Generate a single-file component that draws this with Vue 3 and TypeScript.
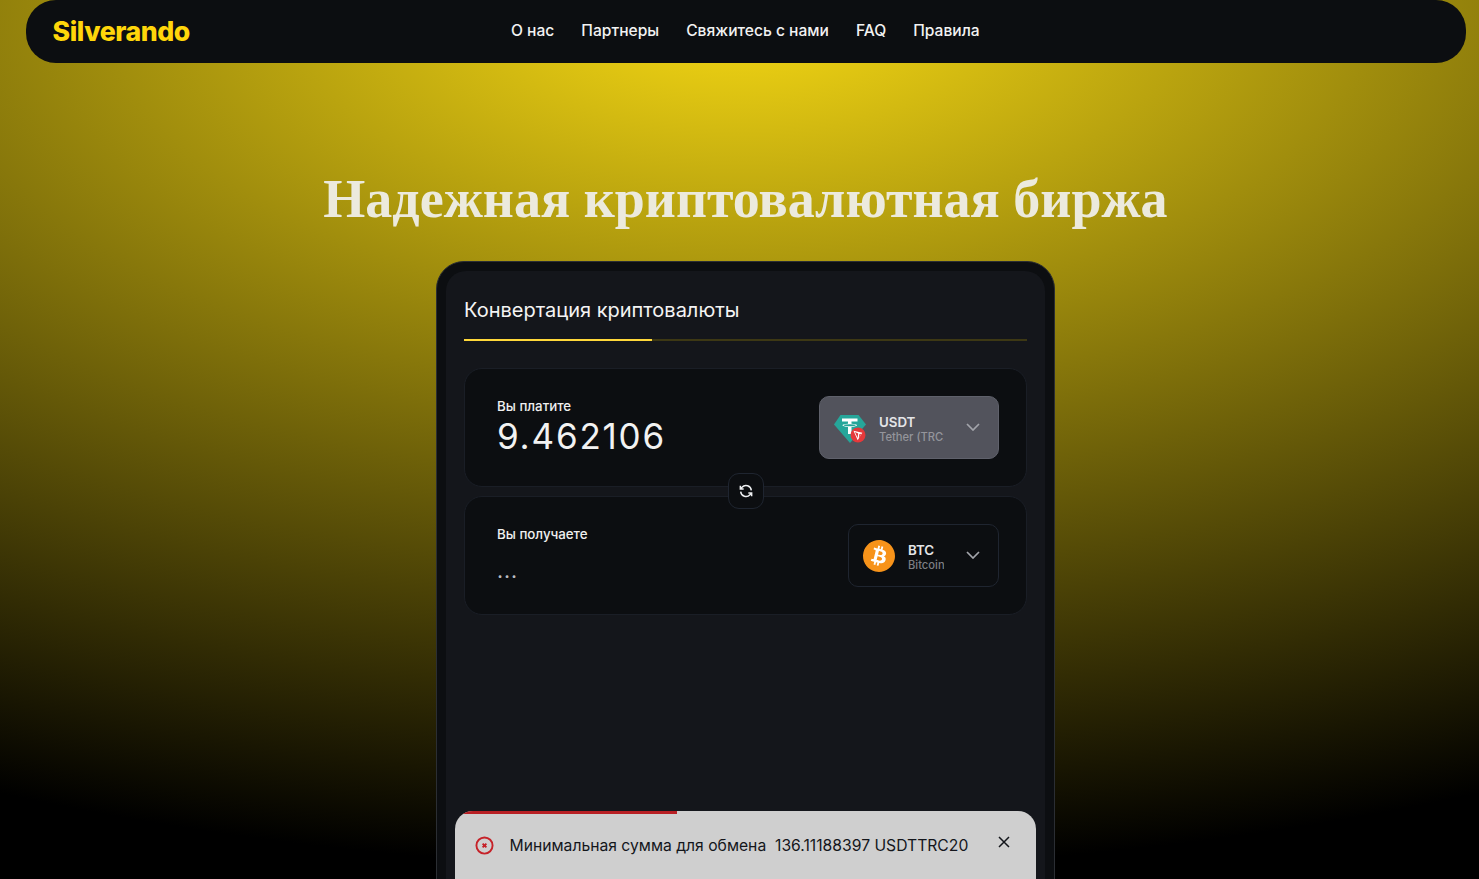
<template>
  <div class="page">
    <header class="topbar">
      <div class="logo">Silverando</div>
      <nav class="menu">
        <a v-for="item in menu" :key="item">{{ item }}</a>
      </nav>
    </header>

    <h1 class="title">Надежная криптовалютная биржа</h1>

    <section class="frame">
      <div class="panel">
        <div class="tabs"><span class="tab">Конвертация криптовалюты</span></div>

        <div class="box">
          <div class="field">
            <label>Вы платите</label>
            <div class="amount">9.462106</div>
          </div>
          <button class="coin coin-active">
            <svg class="coin-icon" viewBox="0 0 32 32">
              <path d="M6.500 3h18l7.500 9.500L16 31 0 12.500z" fill="#26a69a" />
              <path d="M8 6.500h15.500v3h-6v2.200c3 .2 5.600.8 5.600 1.600s-2.600 1.400-5.600 1.600V22H14v-7.100c-3-.2-5.600-.8-5.600-1.600s2.600-1.400 5.600-1.600V9.500H8z" fill="#fff" />
              <ellipse cx="15.700" cy="13.200" rx="6" ry="1" fill="#26a69a" />
              <circle cx="24" cy="23" r="7.500" fill="#e5393b" />
              <path d="M19.500 18.800l8.800 1.900-4.600 7.500zM20.900 20l2.700 6.100.6-4.500zM25.400 22l-.6 4.300 2.500-4.500z" fill="#fff" fill-rule="evenodd" />
            </svg>
            <span class="coin-text">
              <b>USDT</b>
              <small>Tether (TRC20)</small>
            </span>
            <svg class="chev" viewBox="0 0 14 8"><path d="M1 1l6 6 6-6" /></svg>
          </button>
        </div>

        <button class="swap">
          <svg viewBox="0 0 24 24">
            <path d="M20 11a8 8 0 0 0-14-4.500L3.500 9M3.500 4v5h5M4 13a8 8 0 0 0 14 4.500l2.500-2.500M20.500 20v-5h-5" />
          </svg>
        </button>

        <div class="box">
          <div class="field">
            <label>Вы получаете</label>
            <div class="dots">...</div>
          </div>
          <button class="coin">
            <svg class="coin-icon btc" viewBox="0 0 24 24">
              <circle cx="12" cy="12" r="10" fill="#fff" />
              <path fill="#f7931a" d="M23.638 14.904c-1.602 6.43-8.113 10.34-14.542 8.736C2.67 22.05-1.244 15.525.362 9.105 1.962 2.67 8.475-1.243 14.9.358c6.43 1.605 10.342 8.115 8.738 14.548v-.002zm-6.35-4.613c.24-1.59-.974-2.45-2.64-3.03l.54-2.153-1.315-.33-.525 2.107c-.345-.087-.705-.167-1.064-.25l.526-2.127-1.32-.33-.54 2.165c-.285-.067-.565-.132-.84-.2l-1.815-.45-.35 1.407s.975.225.955.236c.535.136.63.486.615.766l-1.477 5.92c-.075.166-.24.406-.614.314.015.02-.96-.24-.96-.24l-.66 1.51 1.71.426.93.242-.54 2.19 1.32.327.54-2.17c.36.1.705.19 1.05.273l-.51 2.154 1.32.33.545-2.19c2.24.427 3.93.257 4.64-1.774.57-1.637-.03-2.58-1.217-3.196.854-.193 1.5-.76 1.68-1.93h.01zm-3.01 4.22c-.404 1.64-3.157.75-4.05.53l.72-2.9c.896.23 3.757.67 3.33 2.37zm.41-4.24c-.37 1.49-2.662.735-3.405.55l.654-2.64c.744.18 3.137.524 2.75 2.084v.006z" />
            </svg>
            <span class="coin-text">
              <b>BTC</b>
              <small>Bitcoin</small>
            </span>
            <svg class="chev" viewBox="0 0 14 8"><path d="M1 1l6 6 6-6" /></svg>
          </button>
        </div>
      </div>
    </section>

    <div class="toast">
      <div class="progress"></div>
      <svg class="toast-icon" viewBox="0 0 20 20">
        <circle cx="10" cy="10" r="8.500" />
        <path d="M8 8l4 4M12 8l-4 4" />
      </svg>
      <span class="toast-text">Минимальная сумма для обмена&nbsp; 136.11188397 USDTTRC20</span>
      <svg class="toast-close" viewBox="0 0 12 12"><path d="M1 1l10 10M11 1L1 11" /></svg>
    </div>
  </div>
</template>

<script setup lang="ts">
const menu: string[] = ['О нас', 'Партнеры', 'Свяжитесь с нами', 'FAQ', 'Правила']
</script>

<style>
html, body {
  margin: 0;
  height: 100%;
  overflow: hidden;
  background: #000;
}
</style>

<style scoped>
.page {
  position: relative;
  box-sizing: border-box;
  height: 879px;
  overflow: hidden;
  padding-left: 12px;
  display: flex;
  flex-direction: column;
  align-items: center;
  font-family: Inter, "Noto Sans", sans-serif;
  background: radial-gradient(1800px 870px at 50% 0, #ecd013 0%, #ecd013 5%, #000 100%);
}
.topbar {
  box-sizing: border-box;
  flex: none;
  width: 1440px;
  height: 63px;
  border-radius: 30px;
  background: #0c0e11;
  display: flex;
  align-items: center;
  padding: 0 27px 1px;
  position: relative;
}
.logo {
  font-size: 26.700px;
  font-weight: 800;
  letter-spacing: -0.45px;
  color: #ffd60a;
}
.menu {
  position: absolute;
  left: 485.500px;
  top: 0;
  height: 60px;
  display: flex;
  align-items: center;
  gap: 27px;
}
.menu a {
  color: #f2f2f2;
  font-size: 15.600px;
  font-weight: 500;
}
.title {
  flex: none;
  margin: 105px 0 31px;
  font-family: "Liberation Serif", serif;
  font-size: 54px;
  line-height: 62px;
  font-weight: 700;
  color: #eceadd;
}
.frame {
  flex: none;
  box-sizing: border-box;
  width: 619px;
  height: 700px;
  padding: 9px;
  border: 1px solid #2b2e33;
  border-radius: 28px;
  background: #0c0e11;
}
.panel {
  position: relative;
  box-sizing: border-box;
  height: 100%;
  padding: 0 18px;
  border-radius: 20px;
  background: #14161b;
}
.tabs {
  box-sizing: border-box;
  height: 70px;
  border-bottom: 2px solid #3d3814;
  display: flex;
  margin-bottom: 27px;
}
.tab {
  box-sizing: border-box;
  width: 188px;
  height: 70px;
  padding-top: 27px;
  border-bottom: 2px solid #ffd83a;
  color: #f4f4f4;
  font-size: 20px;
  line-height: 25px;
  white-space: nowrap;
}
.box {
  box-sizing: border-box;
  height: 119px;
  margin-bottom: 9px;
  padding: 27px 27px 0 32px;
  display: flex;
  justify-content: space-between;
  align-items: flex-start;
  border: 1px solid #1a1e26;
  border-radius: 18px;
  background: #0c0e11;
}
.field {
  margin-top: 1px;
}
.field label {
  display: block;
  color: #f0f0f0;
  font-size: 13.300px;
  font-weight: 500;
  line-height: 18px;
}
.amount {
  margin-top: 1px;
  color: #f2f2f2;
  font-size: 35px;
  line-height: 40px;
  letter-spacing: 1.800px;
}
.dots {
  margin-top: 16px;
  color: #b9bcc2;
  font-size: 21px;
  line-height: 24px;
  letter-spacing: 1px;
}
.coin {
  box-sizing: border-box;
  width: 151px;
  height: 63px;
  padding: 0 18px 0 14px;
  display: flex;
  align-items: center;
  border: 1px solid #1f2530;
  border-radius: 10px;
  background: transparent;
  font-family: inherit;
}
.coin-active {
  width: 180px;
  background: #52535c;
  border-color: #5f616b;
}
.coin-icon {
  flex: none;
  width: 32px;
  height: 32px;
}
.coin-text {
  flex: 1;
  min-width: 0;
  margin-left: 13px;
  padding-top: 3px;
  display: flex;
  flex-direction: column;
  text-align: left;
  overflow: hidden;
}
.coin-text b {
  color: #e4e5e8;
  font-size: 13.300px;
  font-weight: 600;
  line-height: 15px;
}
.coin-text small {
  color: #7c7e84;
  font-size: 11.200px;
  font-weight: 500;
  line-height: 14px;
  white-space: nowrap;
  overflow: hidden;
}
.coin-active .coin-text small {
  color: #94959b;
}
.chev {
  flex: none;
  width: 14px;
  height: 8px;
  margin-left: 22px;
  margin-bottom: 2px;
  fill: none;
  stroke: #a3a5ab;
  stroke-width: 1.700;
}
.swap {
  position: absolute;
  left: 282px;
  top: 202px;
  width: 36px;
  height: 36px;
  padding: 0;
  display: flex;
  align-items: center;
  justify-content: center;
  border: 1px solid #1f2530;
  border-radius: 11px;
  background: #0c0e11;
}
.swap svg {
  width: 16px;
  height: 16px;
  fill: none;
  stroke: #eef0f2;
  stroke-width: 2.200;
}
.toast {
  position: absolute;
  left: 455px;
  top: 811px;
  width: 581px;
  height: 90px;
  overflow: hidden;
  box-sizing: border-box;
  padding: 0 26px 22px 20px;
  display: flex;
  align-items: center;
  border-radius: 18px;
  background: #cfcfcf;
}
.progress {
  position: absolute;
  left: 0;
  top: 0;
  width: 222px;
  height: 3px;
  background: #b81f24;
}
.toast-icon {
  flex: none;
  width: 19px;
  height: 19px;
  fill: none;
  stroke: #c62229;
  stroke-width: 2;
}
.toast-text {
  margin-left: 15.500px;
  color: #14161b;
  font-size: 15.700px;
  white-space: nowrap;
}
.toast-close {
  flex: none;
  width: 12px;
  height: 12px;
  margin-left: auto;
  margin-bottom: 7px;
  fill: none;
  stroke: #14161b;
  stroke-width: 1.500;
}
</style>
